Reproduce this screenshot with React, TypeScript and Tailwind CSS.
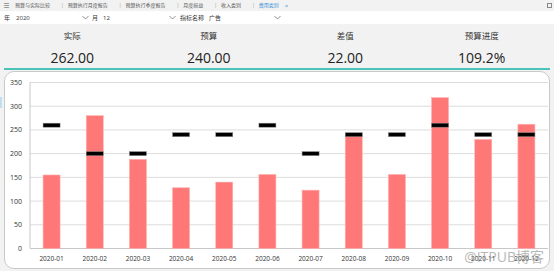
import React from "react";

const actual = [155, 280, 188, 128, 140, 156, 123, 240, 156, 318, 230, 262];
const budget = [260, 200, 200, 240, 240, 260, 200, 240, 240, 260, 240, 240];
const labels = ["2020-01","2020-02","2020-03","2020-04","2020-05","2020-06","2020-07","2020-08","2020-09","2020-10","2020-11","2020-12"];

const PL = 25;
const PR = 543;
const Y0 = 176.5;
const K = 0.4743;
const y = (v: number) => Y0 - v * K;

function Chevron() {
  return (
    <svg width="7" height="5" viewBox="0 0 7 5" className="shrink-0">
      <path d="M0.5 1 L3.5 4 L6.5 1" fill="none" stroke="#777" strokeWidth="0.8" />
    </svg>
  );
}

function Chart() {
  const step = (PR - PL) / 12;
  const ticks = [0, 50, 100, 150, 200, 250, 300, 350];
  return (
    <svg width="544" height="196" viewBox="0 0 544 196" className="block">
      {ticks.map((t) => (
        <g key={t}>
          {t > 0 && <line x1={PL} x2={PR} y1={y(t)} y2={y(t)} stroke="#dcdcdc" strokeWidth="1" />}
          <text x={17} y={y(t) + 2.5} fontSize="7" textAnchor="end" fill="#333" fontFamily="'Open Sans', sans-serif">{t}</text>
        </g>
      ))}
      <line x1={PL} x2={PL} y1={y(350)} y2={Y0} stroke="#c8c8c8" strokeWidth="1" />
      <line x1={PL} x2={PR} y1={Y0} y2={Y0} stroke="#c8c8c8" strokeWidth="1" />
      {actual.map((v, i) => {
        const cx = PL + step * (i + 0.5);
        return (
          <rect key={"a" + i} x={cx - 8.5} y={y(v)} width={17} height={Y0 - y(v)} fill="#ff7878" stroke="#ffb0b0" strokeWidth="0.6" />
        );
      })}
      {budget.map((v, i) => {
        const cx = PL + step * (i + 0.5);
        return (
          <rect key={"b" + i} x={cx - 8.5} y={y(v) - 2} width={17} height={4} fill="#000" stroke="#888" strokeWidth="0.5" />
        );
      })}
      {labels.map((l, i) => {
        const cx = PL + step * (i + 0.5);
        return (
          <text key={l} x={cx} y={188.5} fontSize="6.5" textAnchor="middle" fill="#333" fontFamily="'Open Sans', sans-serif">{l}</text>
        );
      })}
    </svg>
  );
}

export default function App() {
  const tabs = ["预算与实际比较", "预算执行月度报告", "预算执行季度报告", "月度损益", "收入类别"];
  const kpis = [
    ["实际", "262.00"],
    ["预算", "240.00"],
    ["差值", "22.00"],
    ["预算进度", "109.2%"],
  ];
  return (
    <div
      className="relative w-[554px] h-[271px] overflow-hidden bg-[#f2f2f2] text-[#333]"
      style={{ fontFamily: "'Open Sans', 'Noto Sans CJK SC', sans-serif" }}
    >
      {/* tabs */}
      <div className="h-[11px] flex items-center pl-[3px] text-[5px] text-[#555] bg-[#f2f2f2] relative">
        <span className="text-[7px] leading-none mr-[5px]">≡</span>
        {tabs.map((t) => (
          <React.Fragment key={t}>
            <span className="leading-none">{t}</span>
            <span className="ml-[11px] mr-[4px] text-[#999] leading-none">|</span>
          </React.Fragment>
        ))}
        <span className="leading-none text-[#3b8fd6]">费用类别</span>
        <span className="ml-[6px] text-[6px] leading-none text-[#3b8fd6]">×</span>
        <div className="absolute right-[2px] top-[3px] w-[5px] h-[5px] border border-[#888]" />
      </div>
      {/* filters */}
      <div className="h-[13px] flex items-center bg-white text-[6px] pl-[4px]">
        <span className="leading-none">年</span>
        <div className="ml-[4px] w-[77px] h-[11px] flex items-center justify-between px-[2px] bg-white">
          <span className="leading-none">2020</span>
          <Chevron />
        </div>
        <span className="ml-[1px] leading-none">月</span>
        <div className="ml-[3px] w-[77px] h-[11px] flex items-center justify-between px-[2px] bg-white">
          <span className="leading-none">12</span>
          <Chevron />
        </div>
        <span className="ml-[2px] leading-none">指标名称</span>
        <div className="ml-[3px] w-[76px] h-[11px] flex items-center justify-between px-[2px] bg-white">
          <span className="leading-none">广告</span>
          <Chevron />
        </div>
      </div>
      {/* KPIs */}
      <div className="h-[46px] ml-[4px] mr-[4px] border-b-2 border-[#4cc3b8] grid grid-cols-4">
        {kpis.map(([l, v]) => (
          <div key={l} className="flex flex-col items-center pt-[8px]">
            <span className="text-[8.5px] leading-none text-[#333]">{l}</span>
            <span className="mt-[10px] text-[14px] leading-none text-[#222]">{v}</span>
          </div>
        ))}
      </div>
      {/* chart card */}
      <div className="mt-[1px] ml-[4px] w-[546px] h-[198px] bg-white border border-[#c9c9c9] rounded-[10px] overflow-hidden relative">
        <Chart />
        <span className="absolute right-[5px] bottom-[4px] text-[14px] leading-none text-[#9a9a9a] opacity-70">@ITPUB博客</span>
      </div>
      {/* left edge marks */}
      <div className="absolute left-0 top-[97px] w-[2px] h-[11px] bg-[#bfe0f0]" />
    </div>
  );
}
